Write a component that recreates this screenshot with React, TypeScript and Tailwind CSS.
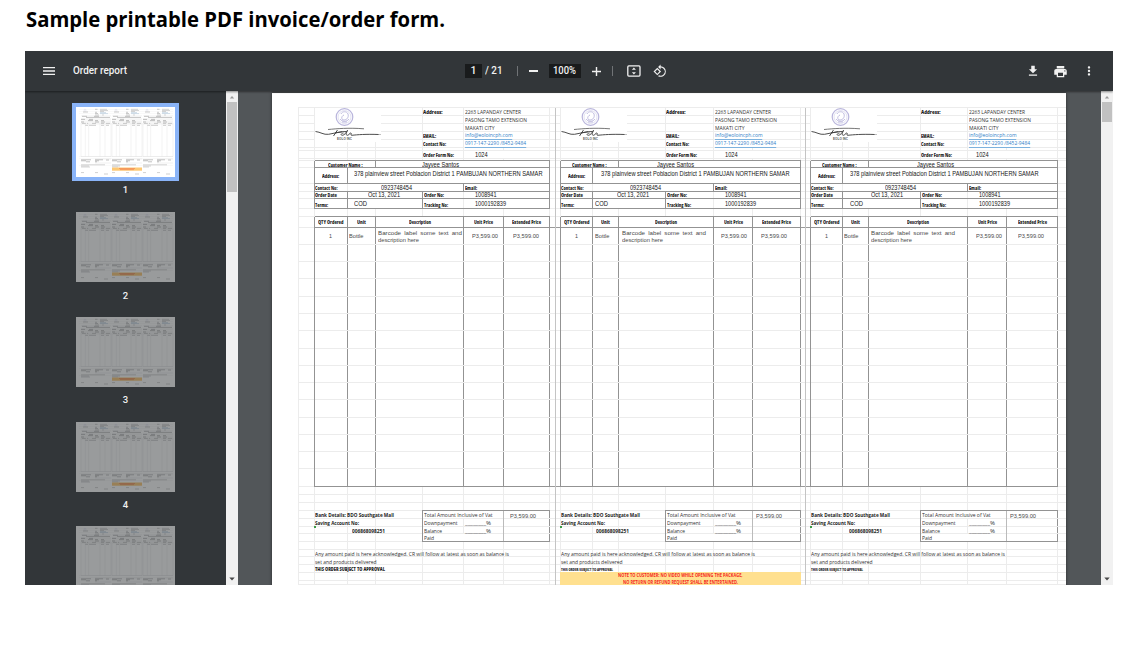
import React, { useLayoutEffect, useRef } from "react";
import {
  MdFileDownload,
  MdMenu,
  MdMoreVert,
  MdPrint,
  MdRotate90DegreesCcw,
} from "react-icons/md";

/* One line of text, condensed or stretched to a given width. */
function Fit({ w, className = "", children }: { w: number; className?: string; children: React.ReactNode }) {
  const ref = useRef<HTMLSpanElement>(null);
  useLayoutEffect(() => {
    const apply = () => {
      const el = ref.current;
      if (el && el.offsetWidth) {
        el.style.transform = "none";
        el.style.transform = `scaleX(${w / el.getBoundingClientRect().width})`;
      }
    };
    apply();
    document.fonts?.ready.then(apply);
  }, [w]);
  return (
    <span className="flex shrink-0" style={{ width: w }}>
      <span ref={ref} className={`block shrink-0 origin-left whitespace-pre ${className}`}>
        {children}
      </span>
    </span>
  );
}

const label = "font-['Open_Sans',sans-serif] text-[5.4px] leading-[8px] font-extrabold text-[#1c1c1c]";
const body = "font-['Open_Sans',sans-serif] text-[6px] leading-[8px] text-[#303030]";
const strong = "font-['Open_Sans',sans-serif] text-[6px] leading-[8px] font-bold text-[#1c1c1c]";
const value = "font-['Liberation_Sans',sans-serif] text-[6.4px] leading-[8px] text-[#161616]";
const muted = "font-['Liberation_Sans',sans-serif] text-[6.2px] leading-[8px] text-[#4a4a4a]";
const link = "font-['Open_Sans',sans-serif] text-[6px] leading-[7px] text-[#2f80c8] border-b border-[#7db2de]";
const warning = "font-['Open_Sans',sans-serif] text-[5.4px] leading-[7px] font-bold text-[#f5261b]";

type Txt = { t: string; w: number; x?: number; dy?: number; f: string };
type Cell = { n: number; k?: boolean; text?: Txt };
type Copy = {
  edges: number[];
  x: Record<"form" | "name" | "who" | "addr" | "street" | "tel" | "date" | "order" | "terms" | "bottle" | "desc" | "p1" | "p2" | "acct" | "total", number>;
  approval: number;
  note?: boolean;
};

const copies: Copy[] = [
  {
    edges: [314, 348, 376, 423, 464, 504, 550],
    x: { form: 475.3, name: 327.7, who: 421.5, addr: 322, street: 354, tel: 381.3, date: 368, order: 475.3, terms: 354.3, bottle: 349, desc: 378, p1: 472.3, p2: 512.5, acct: 352, total: 510 },
    approval: 70,
  },
  {
    edges: [560, 593, 619, 666, 714, 753, 801],
    x: { form: 724.5, name: 572, who: 657, addr: 568, street: 600.7, tel: 630.3, date: 617, order: 724.5, terms: 595.3, bottle: 595, desc: 622, p1: 721, p2: 761.3, acct: 596.3, total: 756 },
    approval: 52,
    note: true,
  },
  {
    edges: [810, 843, 869, 921, 968, 1007, 1058],
    x: { form: 976, name: 822, who: 917, addr: 818, street: 849.7, tel: 884.7, date: 871.3, order: 978.7, terms: 850, bottle: 844.3, desc: 871, p1: 975.7, p2: 1018.3, acct: 849, total: 1010.3 },
    approval: 52,
  },
];

function Row({ copy, h, dark = false, cells }: { copy: Copy; h: number; dark?: boolean; cells?: Cell[] }) {
  const list: Cell[] = cells ?? [1, 1, 1, 1, 1, 1].map((n) => ({ n }));
  let at = 0;
  return (
    <div className={`flex shrink-0 border-b ${dark ? "border-[#939393]" : "border-[#ececec]"}`} style={{ height: h }}>
      {list.map((c, i) => {
        const left = copy.edges[at];
        at += c.n;
        const width = copy.edges[at] - left - (i === 0 ? 1 : 0);
        const start = i === 0 ? left + 1 : left;
        const t = c.text;
        return (
          <div
            key={i}
            className={`flex shrink-0 items-center border-r ${c.k ? "border-[#939393]" : "border-[#ececec]"} ${t && t.x === undefined ? "justify-center" : ""}`}
            style={{ width }}
          >
            {t && (
              <div style={{ marginLeft: t.x === undefined ? 0 : t.x - start, marginTop: (t.dy ?? 0) * 2 }}>
                <Fit w={t.w} className={t.f}>{t.t}</Fit>
              </div>
            )}
          </div>
        );
      })}
    </div>
  );
}

function Seal() {
  return (
    <svg className="absolute top-0 left-px bg-white" width="66" height="34" viewBox="0 0 66 34" fill="none">
      <circle cx="29.500" cy="9" r="8.300" stroke="#b9b5dc" strokeWidth="1.200" />
      <circle cx="29.500" cy="9" r="6.500" stroke="#cfcce8" strokeWidth="0.600" />
      <path d="M26 6c1-3 6-3 7 0s-1 6-4 6-3-4 0-5M25 11c2 3 7 3 9 0M27 14h5" stroke="#b3aed8" strokeWidth="0.800" />
      <path d="M13 21.500c9-.8 20-1.900 36-.7" stroke="#555" strokeWidth="0.800" />
      <path d="M0.500 23.500c5 .5 8 3.500 13 2.800 6-1 12-3 18-2.800M22.500 22l-4 6M20 25l7-1.200M28.500 25c-2 0-3.500 2.300-1.200 2.300s4-3 5.200-5c-1.400 3-2 5 0 5s1.500-2.300 3.200-2.300-1 2.500 1 2.300c6-.6 14-1.300 27-.8" stroke="#3a3a3a" strokeWidth="0.900" />
      <circle cx="65" cy="26.500" r="0.500" fill="#555" />
      <text x="22" y="31.800" fontSize="3" textLength="15" fill="#555" fontFamily="Liberation Sans, sans-serif" fontWeight="bold">EOLO INC</text>
    </svg>
  );
}

function Invoice({ copy }: { copy: Copy }) {
  const { edges: e, x } = copy;
  const head = (lt: string, lw: number, vt: string, vw: number, f: string, vx = e[4] + 1): Cell[] => [
    { n: 1 },
    { n: 1 },
    { n: 1 },
    { n: 1, text: lt ? { t: lt, w: lw, x: e[3], f: label, dy: 0.5 } : undefined },
    { n: 2, text: { t: vt, w: vw, x: vx, f, dy: 0.5 } },
  ];
  const sum = (t: string, w: number, blank: boolean, price?: boolean): Cell[] => [
    { n: 1 },
    { n: 1 },
    { n: 1, k: true },
    ...(blank
      ? [
          { n: 1, text: { t, w, x: e[3] + 0.5, f: body, dy: 0.5 } },
          { n: 1, text: { t: "________%", w: 26, x: e[4] + 1, f: body, dy: 0.5 } },
        ]
      : [{ n: 2, text: { t, w, x: e[3] + 0.5, f: body, dy: 0.5 } }]),
    { n: 1, k: true, text: price ? { t: "P3,599.00", w: 26, x: x.total, f: muted, dy: 1 } : undefined },
  ];
  const grid: Cell[] = [1, 1, 2, 1, 1].map((n) => ({ n, k: true }));
  const itemHeads: [number, string, number][] = [
    [1, "QTY Ordered", 25.5],
    [1, "Unit", 9],
    [2, "Description", 22],
    [1, "Unit Price", 19],
    [1, "Extended Price", 29],
  ];
  return (
    <div className="relative flex shrink-0 flex-col" style={{ width: e[6] - e[0] }}>
      <div className="flex flex-col border-l border-[#ececec]">
        <Row copy={copy} h={8} cells={head("Address:", 19.5, "2263 LAPANDAY CENTER", 56, body)} />
        <Row copy={copy} h={8} cells={head("", 0, "PASONG TAMO EXTENSION", 62, body)} />
        <Row copy={copy} h={8} cells={head("", 0, "MAKATI CITY", 29.5, body)} />
        <Row copy={copy} h={8} cells={head("EMAIL:", 13, "info@eoloincph.com", 47.5, link)} />
        <Row copy={copy} h={8} cells={head("Contact No:", 23, "0917-147-2290 /8452-9484", 61, link)} />
        <Row copy={copy} h={3} />
        <Row copy={copy} h={8} cells={head("Order Form No:", 31, "1024", 12.7, value, x.form)} />
        <Row copy={copy} h={2} dark />
      </div>
      <div className="flex flex-col border-l border-[#939393]">
        <Row copy={copy} h={7} dark cells={[
          { n: 2, k: true, text: { t: "Customer Name :", w: 34.5, x: x.name, f: label, dy: 0.5 } },
          { n: 4, k: true, text: { t: "Jayvee Santos", w: 37, x: x.who, f: value, dy: 0.5 } },
        ]} />
        <Row copy={copy} h={16} dark cells={[
          { n: 1, k: true, text: { t: "Address:", w: 17, x: x.addr, f: label } },
          { n: 5, k: true, text: { t: "378 plainview street Poblacion District 1 PAMBUJAN NORTHERN SAMAR", w: 188.5, x: x.street, f: value, dy: -2 } },
        ]} />
        <Row copy={copy} h={8} dark cells={[
          { n: 1, text: { t: "Contact No:", w: 22.5, x: e[0] + 1, f: label } },
          { n: 3, k: true, text: { t: "0923748454", w: 31, x: x.tel, f: value } },
          { n: 2, k: true, text: { t: "Email:", w: 12, x: e[4] + 0.5, f: label } },
        ]} />
        <Row copy={copy} h={7} dark cells={[
          { n: 1, k: true, text: { t: "Order Date", w: 22, x: e[0] + 1, f: label } },
          { n: 2, k: true, text: { t: "Oct 13, 2021", w: 32, x: x.date, f: value } },
          { n: 1, text: { t: "Order No:", w: 20, x: e[3] + 0.5, f: label } },
          { n: 2, k: true, text: { t: "1008941", w: 21.5, x: x.order, f: value } },
        ]} />
        <Row copy={copy} h={10} dark cells={[
          { n: 1, k: true, text: { t: "Terms:", w: 13, x: e[0] + 1, f: label, dy: 1 } },
          { n: 2, k: true, text: { t: "COD", w: 13, x: x.terms, f: value } },
          { n: 1, text: { t: "Tracking No:", w: 24, x: e[3] + 0.5, f: label, dy: 1 } },
          { n: 2, k: true, text: { t: "1000192839", w: 31, x: x.order, f: value } },
        ]} />
      </div>
      <div className="flex flex-col border-l border-[#ececec]">
        <Row copy={copy} h={8} dark />
      </div>
      <div className="flex flex-col border-l border-[#939393]">
        <Row copy={copy} h={11} dark cells={itemHeads.map(([n, t, w]) => ({ n, k: true, text: { t, w, f: label } }))} />
        <Row copy={copy} h={17} cells={[
          { n: 1, k: true, text: { t: "1", w: 3, x: e[0] + 14.5, f: muted } },
          { n: 1, k: true, text: { t: "Bottle", w: 14.5, x: x.bottle, f: muted } },
          { n: 2, k: true },
          { n: 1, k: true, text: { t: "P3,599.00", w: 26, x: x.p1, f: muted } },
          { n: 1, k: true, text: { t: "P3,599.00", w: 26, x: x.p2, f: muted } },
        ]} />
        {Array.from({ length: 14 }, (_, i) => (
          <Row key={i} copy={copy} h={[2, 5, 9, 13].includes(i) ? 18 : 17} dark={i === 13} cells={grid} />
        ))}
      </div>
      <div className="flex flex-col border-l border-[#ececec]">
        <Row copy={copy} h={8} />
        <Row copy={copy} h={8} />
        <Row copy={copy} h={8} />
        <div className="relative flex flex-col">
          <Row copy={copy} h={8} cells={sum("Total Amount Inclusive of Vat", 68.5, false, true)} />
          <Row copy={copy} h={8} cells={sum("Downpayment", 33.5, true)} />
          <Row copy={copy} h={7} cells={sum("Balance", 18, true)} />
          <Row copy={copy} h={8} cells={sum("Paid", 10, false)} />
          <div
            className="absolute -top-px right-0 bottom-0 flex justify-end border border-r-0 border-[#939393]"
            style={{ width: e[6] - e[3] + 1 }}
          >
            <div className="border-l border-[#bbb]" style={{ width: e[6] - e[5] + 1 }} />
          </div>
          <div className="absolute top-0 left-0">
            <Fit w={79} className={strong}>Bank Details: BDO Southgate Mall</Fit>
            <Fit w={44} className={strong}>Saving Account No:</Fit>
            <div style={{ paddingLeft: x.acct - e[0] - 1 }}>
              <Fit w={33} className={strong}>006868098251</Fit>
            </div>
            <div className="absolute top-[15px] -left-px h-0.5 w-0.5 bg-[#3e9b48]" />
          </div>
        </div>
        <Row copy={copy} h={8} />
        <div className="relative flex flex-col">
          <Row copy={copy} h={7} />
          <Row copy={copy} h={8} />
          <Row copy={copy} h={8} />
          <Row copy={copy} h={8} />
          <Row copy={copy} h={4} />
          <div className="absolute top-0 left-0">
            <Fit w={194} className={body}>Any amount paid is here acknowledged. CR will follow at latest as soon as balance is</Fit>
            <Fit w={61.5} className={body}>set and products delivered</Fit>
            <Fit
              w={copy.approval}
              className={
                copy.approval < 60
                  ? "font-['Open_Sans',sans-serif] text-[4px] leading-[7px] font-extrabold text-[#222]"
                  : "font-['Open_Sans',sans-serif] text-[5.4px] leading-[7px] font-extrabold text-[#1c1c1c]"
              }
            >
              THIS ORDER SUBJECT TO APPROVAL
            </Fit>
          </div>
          {copy.note && (
            <div className="absolute top-[22px] right-0 -left-px flex h-[14px] flex-col items-center bg-[#ffe08f]">
              <Fit w={124.5} className={warning}>NOTE TO CUSTOMER: NO VIDEO WHILE OPENING THE PACKAGE,</Fit>
              <Fit w={115} className={warning}>NO RETURN OR REFUND REQUEST SHALL BE ENTERTAINED.</Fit>
            </div>
          )}
        </div>
      </div>
      <Seal />
      <div className="absolute top-[121px] flex flex-col" style={{ left: x.desc - e[0] }}>
        <span className="block h-[7px] w-[84px] font-['Liberation_Sans',sans-serif] text-[6.2px] leading-[7.5px] whitespace-nowrap text-[#4a4a4a] [text-align-last:justify]">Barcode label some text and</span>
        <Fit w={41} className="font-['Liberation_Sans',sans-serif] text-[6.2px] leading-[7.5px] text-[#4a4a4a]">description here</Fit>
      </div>
    </div>
  );
}

const heights = [8, 8, 8, 8, 8, 3, 8, 2, 7, 16, 8, 7, 10, 8, 11, 17, 17, 17, 18, 17, 17, 18, 17, 17, 17, 18, 17, 17, 17, 18, 8, 8, 8, 8, 8, 7, 8, 8, 7, 8, 8, 8, 4];

function Gutter({ className, rule = false }: { className: string; rule?: boolean }) {
  return (
    <div className={`flex shrink-0 ${className}`}>
      {[0, 1].map((half) => (
        <div key={half} className={`flex flex-1 flex-col ${rule && half === 0 ? "border-r border-[#c4c4c4]" : ""}`}>
          {heights.map((h, i) => (
            <div
              key={i}
              className={`shrink-0 border-b ${rule && (i === 14 || i === 29) ? "border-[#9a9a9a]" : "border-[#ececec]"}`}
              style={{ height: h }}
            />
          ))}
        </div>
      ))}
    </div>
  );
}

function MiniPage() {
  const offsets = [5, 36, 67];
  return (
    <svg className="block bg-white" width="99" height="70" viewBox="0 0 99 70">
      <path d="M3 2.500h94M3 4.500h94M3 6.500h94M3 49.500h94M3 51.500h94M3 58.500h94" stroke="#f3f3f3" strokeWidth="0.5" />
      {offsets.map((o, i) => (
        <g key={o} transform={`translate(${o} 0)`}>
          <circle cx="4" cy="3.200" r="1" fill="none" stroke="#d9d8e8" strokeWidth="0.5" />
          <path d="M2 5h5M14 2.300h2.500M14 5.300h2M14 6.500h3M14 8h4" stroke="#aaa" strokeWidth="0.6" />
          <path d="M19 2.300h7M19 3.500h8M19 4.500h4M21 8h2" stroke="#aaa" strokeWidth="0.5" />
          <path d="M19 5.600h6M19 6.600h8" stroke="#a3bcd2" strokeWidth="0.5" />
          <path d="M0 8.800h30M0 11.800h30M0 13h30M0 14.600h30M0 15.800h30M0 17h30" stroke="#d6d6d6" strokeWidth="0.3" />
          <path d="M1 9.300h5M13 9.300h5M5 10.400h24M0 12.400h4M8 12.400h4M7 13.600h5M14 13.600h3M20 13.600h3M0 15h3M14 15h4M20 15h4" stroke="#999" strokeWidth="0.6" />
          <path d="M1 16.400h4M6 16.400h1M11 16.400h4M20 16.400h3M25 16.400h4M4 18.300h3M8 18.300h7M20 18.300h3M25 18.300h3" stroke="#aaa" strokeWidth="0.6" />
          <path d="M0 16v33.500M4.300 16v33.500M7.700 16v33.500M19 16v33.500M24 16v33.500M30 16v33.500" stroke="#e0e0e0" strokeWidth="0.4" />
          <path d="M0 49.500h30M14 52h16M14 56h16" stroke="#d8d8d8" strokeWidth="0.4" />
          <path d="M0 52.800h10M0 53.800h5M5 54.800h4M14 52.800h8M14 53.800h4M14 54.800h2M25 53h3" stroke="#999" strokeWidth="0.6" />
          <path d={i === 0 ? "M0 57.800h24M0 59h8M0 60h9" : "M0 57.800h24M0 59h8M0 60h6"} stroke="#aaa" strokeWidth="0.5" />
          <path d="M0 65.600h3M14 65.600h3M23 67h4" stroke="#b0b0b0" strokeWidth="0.6" />
        </g>
      ))}
      <rect x="36" y="60.500" width="30" height="3.200" fill="#fdc873" />
      <path d="M43 61.500h16M44 62.600h14" stroke="#f59a5c" strokeWidth="1" />
    </svg>
  );
}

function ScrollBar({ thumb }: { thumb: string }) {
  return (
    <div className="flex w-3 shrink-0 flex-col items-center bg-[#f1f1f1] pt-1">
      <svg width="6" height="4" viewBox="0 0 6 4"><path d="M0.800 3.500L3 1l2.200 2.500z" fill="#9a9a9a" /></svg>
      <div className={`mt-[3px] w-2.5 bg-[#c1c1c1] ${thumb}`} />
      <svg className="mt-auto mb-1" width="6" height="4" viewBox="0 0 6 4"><path d="M0.300 0.500L3 3.500l2.700-3z" fill="#484848" /></svg>
    </div>
  );
}

const bar = "font-['Roboto',sans-serif] text-[10.5px] leading-[14px] font-medium text-[#f1f1f1]";

function Toolbar() {
  return (
    <header className="z-10 flex h-10 shrink-0 items-center bg-[#323639] text-[#f1f1f1] shadow-[0_1px_2px_rgba(0,0,0,0.45)]">
      <MdMenu className="ml-[16px] h-4 w-4" />
      <div className="ml-4 w-[392px]"><Fit w={54} className={bar}>Order report</Fit></div>
      <div className={`flex h-[14px] w-[17px] items-center justify-center bg-[#191b1c] ${bar}`}>1</div>
      <div className="ml-[3px]"><Fit w={17.5} className={bar}>/ 21</Fit></div>
      <div className="ml-[14px] h-[10px] w-px bg-[#707376]" />
      <div className="ml-[11px] h-[1.5px] w-[9px] bg-[#f1f1f1]" />
      <div className="ml-[11px] flex h-[14px] w-8 items-center justify-center bg-[#191b1c]"><Fit w={23} className={bar}>100%</Fit></div>
      <svg className="ml-[11px]" width="9" height="9" viewBox="0 0 9 9"><path d="M0 4.500h9M4.500 0v9" stroke="#f1f1f1" strokeWidth="1.400" /></svg>
      <div className="ml-[11px] h-[10px] w-px bg-[#707376]" />
      <svg className="ml-[14px]" width="14" height="12" viewBox="0 0 14 12" fill="none">
        <rect x="0.800" y="0.900" width="12.200" height="10.200" rx="1" stroke="#f1f1f1" strokeWidth="1.300" />
        <path d="M6.900 2.400l2 2.300h-4zM6.900 9.600l2-2.300h-4z" fill="#f1f1f1" />
      </svg>
      <MdRotate90DegreesCcw className="ml-3 h-[14px] w-[14px]" />
      <MdFileDownload className="ml-auto h-[14px] w-[14px]" />
      <MdPrint className="ml-[13px] h-[15px] w-[15px]" />
      <MdMoreVert className="mr-[17px] ml-[14px] h-[14px] w-[14px]" />
    </header>
  );
}

const pageLabel = "font-['Roboto',sans-serif] text-[9.5px] leading-[12px] font-medium text-[#f1f1f1]";

export default function App() {
  return (
    <div className="h-[648px] w-[1132px] overflow-hidden bg-white">
      <h1 className="flex h-[51px] pt-[5px] pl-[26px]">
        <Fit w={419} className="font-['Open_Sans',sans-serif] text-[20.5px] leading-[28px] font-bold text-black">Sample printable PDF invoice/order form.</Fit>
      </h1>
      <main className="ml-[25px] flex h-[534px] w-[1088px] flex-col overflow-hidden bg-[#525659]">
        <Toolbar />
        <div className="flex min-h-0 flex-1">
          <aside className="flex w-[201px] shrink-0 flex-col items-center overflow-hidden bg-[#323639] pt-3">
            {[1, 2, 3, 4].map((n) => (
              <div key={n} className="flex h-[104.7px] shrink-0 flex-col items-center">
                {n === 1 ? (
                  <div className="border-[4.5px] border-[#8ab4f8]"><MiniPage /></div>
                ) : (
                  <div className="mt-[4.5px] mb-[4.5px] opacity-50"><MiniPage /></div>
                )}
                <span className={`mt-[3px] ${pageLabel}`}>{n}</span>
              </div>
            ))}
            <div className="mt-[4.5px] opacity-50"><MiniPage /></div>
          </aside>
          <ScrollBar thumb="h-[90px]" />
          <section className="flex min-w-0 flex-1 overflow-hidden pt-0.5 pl-[34px]">
            <div className="flex h-[600px] w-[794px] shrink-0 bg-white pt-[15px] pl-[26px] shadow-[0_0_3px_rgba(0,0,0,0.5)]">
              <div className="-mt-px flex h-fit border-t border-l border-[#ececec]">
                <Gutter className="w-[15px]" />
                <Invoice copy={copies[0]} />
                <Gutter className="w-[10px]" rule />
                <Invoice copy={copies[1]} />
                <Gutter className="w-[9px]" rule />
                <Invoice copy={copies[2]} />
                <Gutter className="w-[8px]" />
              </div>
            </div>
          </section>
          <ScrollBar thumb="h-5" />
        </div>
      </main>
    </div>
  );
}
